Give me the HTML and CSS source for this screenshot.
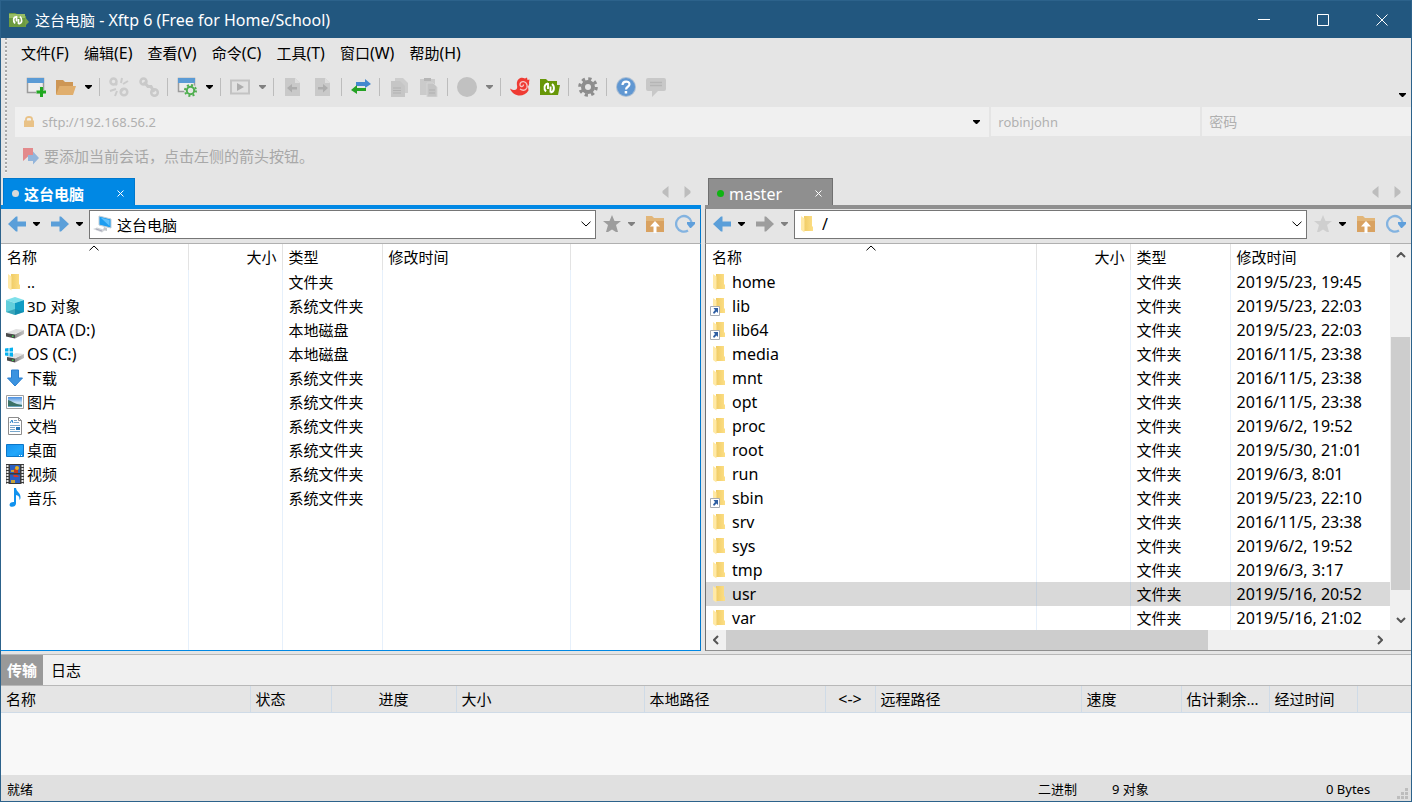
FILE: index.html
```
<!DOCTYPE html>
<html lang="zh-CN">
<head>
<meta charset="utf-8">
<title>这台电脑 - Xftp 6</title>
<link rel="stylesheet" href="styles.css">
</head>
<body>
<svg class="sprite" aria-hidden="true">
  <defs>
    <linearGradient id="gold" x1="0" x2="1"><stop offset="0" stop-color="#f0cc66"/><stop offset="1" stop-color="#fddf86"/></linearGradient>
    <linearGradient id="drive" x1="0" x2="1"><stop offset="0" stop-color="#8c8c8c"/><stop offset="1" stop-color="#c4c4c4"/></linearGradient>
    <linearGradient id="screen" x1="0" y1="0" x2="1" y2="1"><stop offset="0" stop-color="#1793f0"/><stop offset=".6" stop-color="#22a7fb"/><stop offset="1" stop-color="#1292ea"/></linearGradient>
    <linearGradient id="sky" x1="0" y1="0" x2="0" y2="1"><stop offset="0" stop-color="#4a8fe0"/><stop offset=".6" stop-color="#cfe6f5"/><stop offset="1" stop-color="#5b9bb8"/></linearGradient>
  </defs>
  <symbol id="i-folder" viewBox="0 0 20 20"><path d="M6 2h8v10l1 1v4H6z" fill="url(#gold)"/><path d="M3 2l3.500 2.500v14L3 16z" fill="#ffe9a6"/></symbol>
  <symbol id="i-link" viewBox="0 0 20 20"><path d="M6 2h8v10l1 1v4H6z" fill="url(#gold)"/><path d="M3 2l3.500 2.500v14L3 16z" fill="#ffe9a6"/><path d="M.5 10.500h9v9h-9z" fill="#fff" stroke="#a7acb3"/><path d="M3.500 12H8v5l-1.500-1.500L4 18l-1-1.500 2-2.500z" fill="#2f5fa3"/></symbol>
  <symbol id="i-cube" viewBox="0 0 20 20"><path d="M1 4l9-3 9 3-9 3z" fill="#7fe0ea"/><path d="M1 4l9 3v12l-9-3z" fill="#62cfdc"/><path d="M19 4l-9 3v12l9-3z" fill="#109cc4"/><path d="M1 16l9-3 9 3-9 3z" fill="#17839f" opacity=".55"/></symbol>
  <symbol id="i-disk" viewBox="0 0 20 20"><path d="M1 13l10-4 8 1-9 4z" fill="#e0e0e0"/><path d="M1 13l9 1.500v4l-9-2z" fill="#4a4a4a"/><path d="M10 14.500l9-4.500v4l-9 4.500z" fill="url(#drive)"/><path d="M7 15.500h1.500V17H7z" fill="#3fd04c"/></symbol>
  <symbol id="i-osdisk" viewBox="0 0 20 20"><path d="M1 13l10-4 8 1-9 4z" fill="#e0e0e0"/><path d="M2 13l8 1.500v4l-8-2z" fill="#4a4a4a"/><path d="M10 14.500l9-4.500v4l-9 4.500z" fill="url(#drive)"/><path d="M7 15.500h1.500V17H7z" fill="#3fd04c"/><path d="M0 4.500l3.500-.500v3.500H0zM4.500 3.900L8 3.400v4.100H4.500zM0 8.500h3.500V12L0 11.500zM4.500 8.500H8v4.200l-3.500-.500z" fill="#06b0ee"/></symbol>
  <symbol id="i-down" viewBox="0 0 20 20"><path d="M6.500 2h7v8h4L10 18 2.500 10h4z" fill="#3b93e0" stroke="#2a7fd0"/></symbol>
  <symbol id="i-pic" viewBox="0 0 20 20"><path d="M1.500 3.500h17v13h-17z" fill="#fff" stroke="#a0a0a0"/><path d="M3 5h14v10H3z" fill="url(#sky)"/><path d="M3 8c4 1 6 4 14 5v1H3z" fill="#3c7267"/></symbol>
  <symbol id="i-doc" viewBox="0 0 20 20"><path d="M3.500 1.500h10l3 3v14h-13z" fill="#fff" stroke="#8c8c8c"/><path d="M13.500 1.500v3h3" fill="none" stroke="#8c8c8c"/><path d="M5 7l2-3 1 3" fill="none" stroke="#1f7fc9"/><path d="M9 4.500h3M9 6.500h5M5 9.500h10M5 11.500h5M5 13.500h5M5 15.500h10" stroke="#77a7cc"/><path d="M11 11h4v3h-4z" fill="#2474b5"/></symbol>
  <symbol id="i-desktop" viewBox="0 0 20 20"><path d="M1.500 4.500h17v12h-17z" fill="url(#screen)" stroke="#0b76c8"/><path d="M14 15.500h1M16 15.500h1" stroke="#fff"/></symbol>
  <symbol id="i-video" viewBox="0 0 20 20"><path d="M1 0h18v20H1z" fill="#3a3a3a"/><path d="M5 1h10v8H5zM5 10.500h10V19H5z" fill="#2c5fc0"/><path d="M2.500 1v19M17.500 1v19" stroke="#e8e8e8" stroke-width="2" stroke-dasharray="2 1"/><path d="M9 5h4v4H9z" fill="#c33a1d"/><circle cx="12" cy="4" r="2" fill="#e8b121"/><path d="M8 11h4l2 2H9z" fill="#d9392a"/><path d="M6 6h3v2H6zM6 16h4v3H6z" fill="#c9a33a"/></symbol>
  <symbol id="i-music" viewBox="0 0 20 20"><path d="M9 0h2c.300 4 5 4.500 4.500 10-.200 1-.500 1.500-1 2 .200-4-1.500-4.500-3.500-5v8.500C11 18 8 19.500 5.500 18.500 3.500 17 5 13.500 9 14z" fill="#1192ee"/></symbol>
  <symbol id="i-pc" viewBox="0 0 20 20"><path d="M6 2l12 3v9L6 11z" fill="#1d9df0" stroke="#c3ced6"/><path d="M7.500 3.500l9 2.500v6z" fill="#5ec0fb"/><path d="M11 13l3 1v3l-4-1z" fill="#c2c7cb"/><path d="M0 15l4-1.500 8 2.500-3 2.500z" fill="#d0d4d8"/><path d="M3 15l6 2" stroke="#aab"/></symbol>
  <symbol id="i-left" viewBox="0 0 20 20"><path d="M1 10l8-7.500h1.500V7.500H19v5h-8.500v5H9z" fill="currentColor"/></symbol>
  <symbol id="i-right" viewBox="0 0 20 20"><path d="M19 10l-8-7.500H9.500V7.500H1v5h8.500v5H11z" fill="currentColor"/></symbol>
  <symbol id="i-star" viewBox="0 0 20 20"><path d="M10 1l2.500 6H19l-5 4 2 7H14l-4-2.500L6 18H4l2-7-5-4h6.500z" fill="currentColor"/></symbol>
  <symbol id="i-up" viewBox="0 0 20 20"><path d="M1 2h6l2 2h10v14H1z" fill="#e2b679"/><path d="M1 7h18v11H1z" fill="#d9a261"/><path d="M10 7l5 5.500h-3.500V19h-3v-6.500H5z" fill="#fff"/></symbol>
  <symbol id="i-refresh" viewBox="0 0 20 20"><path d="M16.500 8a7.800 7.800 0 1 0-3.500 8.500" fill="none" stroke="#83b3e0" stroke-width="2.300"/><path d="M12 8h8v2l-4 4h-1l-3-4z" fill="#5f9fdb"/></symbol>
  <symbol id="i-new" viewBox="0 0 20 20"><path d="M1.500 1.500h16v14h-16z" fill="#eee" stroke="#9b9b9b" stroke-width="1.500"/><path d="M1 1h17v5H1z" fill="#5b9bd5"/><path d="M13 9h4v4h3.500v3H17v4h-3v-4h-4v-3h4z" fill="#e5e5e5"/><path d="M14 10h3v3.500h3.500v3H17V20h-3v-3.500h-3.500v-3H14z" fill="#21a821"/></symbol>
  <symbol id="i-open" viewBox="0 0 20 20"><path d="M0 3h7l2 2h8v12H0z" fill="#cd9655"/><path d="M3.500 9H20l-3 9H0z" fill="#e0ae6d"/></symbol>
  <symbol id="i-unlink" viewBox="0 0 20 20"><g fill="none" stroke="#cbcbcb" stroke-width="2.500"><circle cx="4.500" cy="4.500" r="3"/><circle cx="15" cy="15" r="3.300"/><path d="M12 12l2 2M8 8L6 6"/></g><path d="M12 6l1-5M14 7l5-3M7 12l-6 2M8 14l-2 5" stroke="#cbcbcb" stroke-width="2"/></symbol>
  <symbol id="i-chain" viewBox="0 0 20 20"><g fill="none" stroke="#c9c9c9" stroke-width="2.500"><circle cx="4.500" cy="4.500" r="3"/><circle cx="15.500" cy="15.500" r="3.300"/><path d="M5 5l4 4.500h3L15 15" stroke-width="3"/></g></symbol>
  <symbol id="i-props" viewBox="0 0 20 20"><path d="M1.500 1.500h16v13h-16z" fill="#eee" stroke="#9b9b9b" stroke-width="1.500"/><path d="M1 1h17v5H1z" fill="#5b9bd5"/><circle cx="13.500" cy="13.500" r="6.500" fill="#e5e5e5"/><circle cx="13.500" cy="13.500" r="3.700" fill="none" stroke="#4eae4e" stroke-width="2"/><circle cx="13.500" cy="13.500" r="5.500" fill="none" stroke="#4eae4e" stroke-width="2" stroke-dasharray="2 2.320"/></symbol>
  <symbol id="i-run" viewBox="0 0 20 20"><path d="M1 3.500h18v13H1z" fill="#e2e2e2" stroke="#c3c3c3" stroke-width="2"/><path d="M7 6l7 4-7 4z" fill="#adadad"/></symbol>
  <symbol id="i-docl" viewBox="0 0 20 20"><path d="M2 1h10l5 5v13H2z" fill="#c9c9c9"/><path d="M12 1v5h5z" fill="#dedede"/><path d="M4 11l5-4v3h5v2.500H9v3z" fill="#adadad"/></symbol>
  <symbol id="i-docr" viewBox="0 0 20 20"><path d="M2 1h10l5 5v13H2z" fill="#c9c9c9"/><path d="M12 1v5h5z" fill="#dedede"/><path d="M15 11l-5-4v3H5v2.500h5v3z" fill="#adadad"/></symbol>
  <symbol id="i-sync" viewBox="0 0 20 20"><path d="M5 5h9V2l6 5-6 4V9H5z" fill="#4488cf"/><path d="M15 11H6V8l-6 5 6 4v-3h9z" fill="#25a225"/></symbol>
  <symbol id="i-copy" viewBox="0 0 20 20"><path d="M6 1h8l5 5v10H6z" fill="#cdcdcd"/><path d="M2 4h9l5 5v11H2z" fill="#c6c6c6"/><path d="M4 11h8M4 13.500h8M4 16h8" stroke="#b2b2b2"/></symbol>
  <symbol id="i-paste" viewBox="0 0 20 20"><path d="M1 2h15v16H1z" fill="#cbcbcb"/><path d="M5 1h7v3H5z" fill="#b6b6b6"/><path d="M8 6h6l4 4v10H8z" fill="#c4c4c4" stroke="#d5d5d5"/><path d="M10 13h6M10 16h6" stroke="#b0b0b0"/></symbol>
  <symbol id="i-disc" viewBox="0 0 20 20"><circle cx="10" cy="10" r="10" fill="#c1c1c1"/></symbol>
  <symbol id="i-xshell" viewBox="0 0 20 20"><path d="M0 11.500c5 3 8 1.500 7-3C6 3 10-1 15 1.500l2-1L17.500 3l2-.500-.500 3c.500 1.500-.200 3-1 4l.500 4C14 21 3 20 0 11.500z" fill="#ef3b33"/><path d="M10 12c4 3 8 0 7-4s-6-4.500-7-1c-.500 3 3.500 3.500 3.500.500" fill="none" stroke="#f7c6c3" stroke-width="1.300"/></symbol>
  <symbol id="i-xftp" viewBox="0 0 20 20"><path d="M0 2h6l2 2h9v4h3l-2 10H0z" fill="#679708"/><path d="M8 6.500C4 7 3.500 12 6 14.500M8 6v6M10.500 15.500c4-.500 4.500-6 1.500-8.500M10.500 15.500V9.500" fill="none" stroke="#fff" stroke-width="1.900"/></symbol>
  <symbol id="i-app" viewBox="0 0 20 20"><path d="M0 3h6l2 1h8v2h1v11H0z" fill="#6c9b3f"/><path d="M0 4h16v4H0z" fill="#97bd65"/><path d="M7.500 6.500C4 7 4 11 6 13.500M7.500 6v5.500M9.500 14c4-.500 4-5 1.500-7.500M9.500 14V9" fill="none" stroke="#fff" stroke-width="1.700"/><path d="M16 7l4 5-4 4z" fill="#78a34a"/></symbol>
  <symbol id="i-gear" viewBox="0 0 20 20"><circle cx="10" cy="10" r="5" fill="none" stroke="#8d8d8d" stroke-width="4"/><circle cx="10" cy="10" r="8.200" fill="none" stroke="#8d8d8d" stroke-width="3.200" stroke-dasharray="3.200 3.240"/></symbol>
  <symbol id="i-help" viewBox="0 0 20 20"><circle cx="10" cy="10" r="10" fill="#a9bdd3"/><circle cx="10" cy="10" r="9" fill="#6097d2"/><path d="M6.500 8c0-4.500 7-4.500 7-.700 0 2.700-3.500 2.200-3.500 5.200" fill="none" stroke="#fff" stroke-width="2.200"/><path d="M8.700 14h2.500v2.500H8.700z" fill="#fff"/></symbol>
  <symbol id="i-chat" viewBox="0 0 20 20"><path d="M2 1h16q2 0 2 2v9q0 2-2 2h-6l-6 6v-6H2q-2 0-2-2V3q0-2 2-2z" fill="#c8c8c8"/><path d="M4 5.500h12M4 8.500h12" stroke="#b5b5b5" stroke-width="1.300"/></symbol>
  <symbol id="i-lock" viewBox="0 0 12 12"><path d="M3 5V3q0-2 3-2t3 2v2" fill="none" stroke="#e9c287" stroke-width="1.800"/><path d="M1 4.500h10v6.500H1z" fill="#e9c287"/></symbol>
  <symbol id="i-flag" viewBox="0 0 16 18"><path d="M0 1h10v12l-5-3.500L0 14z" fill="#e38a8c"/><path d="M5 8h5V4.500l6 6.500-6 6.500V14H5z" fill="#93b5db"/></symbol>
  <symbol id="i-caret" viewBox="0 0 7 4"><path d="M0 0h7v1L4 4H3L0 1z" fill="currentColor"/></symbol>
  <symbol id="i-chev" viewBox="0 0 10 6"><path d="M.5.700L5 5 9.500.700" fill="none" stroke="currentColor"/></symbol>
  <symbol id="i-chevb" viewBox="0 0 10 6"><path d="M1 1l4 4 4-4" fill="none" stroke="#555" stroke-width="2"/></symbol>
  <symbol id="i-tri" viewBox="0 0 6 12"><path d="M6 0v12L0 7V5z" fill="#bdbdbd"/></symbol>
  <symbol id="i-x" viewBox="0 0 7 7"><path d="M.5.500l6 6M6.500.500l-6 6" stroke="currentColor"/></symbol>
</svg>

<div class="window">
  <header class="titlebar">
    <svg class="app-icon"><use href="#i-app"/></svg>
    <h1>这台电脑<span class="latin"> - Xftp 6 (Free for Home/School)</span></h1>
    <button aria-label="最小化"><svg viewBox="0 0 12 12"><path d="M0 5.500h12" stroke="#fff"/></svg></button>
    <button aria-label="最大化"><svg viewBox="0 0 12 12"><path d="M.5.500h11v11H.5z" fill="none" stroke="#fff"/></svg></button>
    <button aria-label="关闭"><svg viewBox="0 0 12 12"><path d="M.5.500l11 11M11.500.500l-11 11" stroke="#fff"/></svg></button>
  </header>

  <div class="dock">
    <div class="grip"></div>
    <div class="bars">
      <nav class="menu">
        <button>文件<span class="latin">(F)</span></button><button>编辑<span class="latin">(E)</span></button><button>查看<span class="latin">(V)</span></button><button>命令<span class="latin">(C)</span></button><button>工具<span class="latin">(T)</span></button><button>窗口<span class="latin">(W)</span></button><button>帮助<span class="latin">(H)</span></button>
      </nav>
      <div class="toolbar">
        <button class="tool" aria-label="新建"><svg><use href="#i-new"/></svg></button>
        <button class="tool" aria-label="打开"><svg><use href="#i-open"/></svg></button>
        <button class="drop" aria-label="打开列表"><svg><use href="#i-caret"/></svg></button>
        <span class="sep"></span>
        <button class="tool" aria-label="断开"><svg><use href="#i-unlink"/></svg></button>
        <button class="tool" aria-label="重新连接"><svg><use href="#i-chain"/></svg></button>
        <span class="sep"></span>
        <button class="tool" aria-label="属性"><svg><use href="#i-props"/></svg></button>
        <button class="drop" aria-label="属性列表"><svg><use href="#i-caret"/></svg></button>
        <span class="sep"></span>
        <button class="tool" aria-label="执行"><svg><use href="#i-run"/></svg></button>
        <button class="drop dim" aria-label="执行列表"><svg><use href="#i-caret"/></svg></button>
        <span class="sep"></span>
        <button class="tool" aria-label="下载"><svg><use href="#i-docl"/></svg></button>
        <button class="tool" aria-label="上传"><svg><use href="#i-docr"/></svg></button>
        <span class="sep"></span>
        <button class="tool" aria-label="同步"><svg><use href="#i-sync"/></svg></button>
        <span class="sep"></span>
        <button class="tool" aria-label="复制"><svg><use href="#i-copy"/></svg></button>
        <button class="tool" aria-label="粘贴"><svg><use href="#i-paste"/></svg></button>
        <span class="sep"></span>
        <button class="tool" aria-label="浏览"><svg><use href="#i-disc"/></svg></button>
        <button class="drop dim" aria-label="浏览列表"><svg><use href="#i-caret"/></svg></button>
        <span class="sep"></span>
        <button class="tool" aria-label="Xshell"><svg><use href="#i-xshell"/></svg></button>
        <button class="tool" aria-label="Xftp"><svg><use href="#i-xftp"/></svg></button>
        <span class="sep"></span>
        <button class="tool" aria-label="选项"><svg><use href="#i-gear"/></svg></button>
        <span class="sep"></span>
        <button class="tool" aria-label="帮助"><svg><use href="#i-help"/></svg></button>
        <button class="tool" aria-label="反馈"><svg><use href="#i-chat"/></svg></button>
        <button class="drop overflow" aria-label="更多"><svg><use href="#i-caret"/></svg></button>
      </div>
      <form class="address">
        <div class="host"><svg class="lock"><use href="#i-lock"/></svg><input aria-label="主机" placeholder="sftp://192.168.56.2"><button type="button" class="drop" aria-label="历史"><svg><use href="#i-caret"/></svg></button></div>
        <input class="user" aria-label="用户名" placeholder="robinjohn">
        <input class="pass" type="password" aria-label="密码" placeholder="密码">
      </form>
    </div>
    <div class="grip"></div>
    <div class="session"><svg><use href="#i-flag"/></svg><span>要添加当前会话，点击左侧的箭头按钮。</span></div>
  </div>

  <main class="panes">
    <section class="pane local">
      <div class="tabs">
        <div class="tab"><i class="dot"></i><span>这台电脑</span><button aria-label="关闭标签"><svg><use href="#i-x"/></svg></button></div>
        <button class="scroll" aria-label="向左"><svg><use href="#i-tri"/></svg></button>
        <button class="scroll next" aria-label="向右"><svg><use href="#i-tri"/></svg></button>
      </div>
      <div class="pathbar">
        <button class="nav blue" aria-label="后退"><svg><use href="#i-left"/></svg></button>
        <button class="drop" aria-label="后退列表"><svg><use href="#i-caret"/></svg></button>
        <button class="nav blue" aria-label="前进"><svg><use href="#i-right"/></svg></button>
        <button class="drop" aria-label="前进列表"><svg><use href="#i-caret"/></svg></button>
        <div class="path"><svg class="ico"><use href="#i-pc"/></svg><input aria-label="本地路径" value="这台电脑"><button aria-label="展开"><svg><use href="#i-chev"/></svg></button></div>
        <button class="nav grey" aria-label="书签"><svg><use href="#i-star"/></svg></button>
        <button class="drop dim" aria-label="书签列表"><svg><use href="#i-caret"/></svg></button>
        <button class="nav" aria-label="上一级"><svg><use href="#i-up"/></svg></button>
        <button class="nav tail" aria-label="刷新"><svg><use href="#i-refresh"/></svg></button>
      </div>
      <div class="list">
        <table class="files">
          <colgroup><col class="w187"><col class="w94"><col class="w100"><col class="w188"><col></colgroup>
          <thead><tr><th>名称<svg class="sort"><use href="#i-chev"/></svg></th><th class="num">大小</th><th>类型</th><th>修改时间</th><th></th></tr></thead>
          <tbody>
            <tr><td><span class="name"><svg><use href="#i-folder"/></svg>..</span></td><td></td><td>文件夹</td><td></td><td></td></tr>
            <tr><td><span class="name"><svg><use href="#i-cube"/></svg>3D 对象</span></td><td></td><td>系统文件夹</td><td></td><td></td></tr>
            <tr><td><span class="name latin"><svg><use href="#i-disk"/></svg>DATA (D:)</span></td><td></td><td>本地磁盘</td><td></td><td></td></tr>
            <tr><td><span class="name latin"><svg><use href="#i-osdisk"/></svg>OS (C:)</span></td><td></td><td>本地磁盘</td><td></td><td></td></tr>
            <tr><td><span class="name"><svg><use href="#i-down"/></svg>下载</span></td><td></td><td>系统文件夹</td><td></td><td></td></tr>
            <tr><td><span class="name"><svg><use href="#i-pic"/></svg>图片</span></td><td></td><td>系统文件夹</td><td></td><td></td></tr>
            <tr><td><span class="name"><svg><use href="#i-doc"/></svg>文档</span></td><td></td><td>系统文件夹</td><td></td><td></td></tr>
            <tr><td><span class="name"><svg><use href="#i-desktop"/></svg>桌面</span></td><td></td><td>系统文件夹</td><td></td><td></td></tr>
            <tr><td><span class="name"><svg><use href="#i-video"/></svg>视频</span></td><td></td><td>系统文件夹</td><td></td><td></td></tr>
            <tr><td><span class="name"><svg><use href="#i-music"/></svg>音乐</span></td><td></td><td>系统文件夹</td><td></td><td></td></tr>
            <tr class="fill"><td></td><td></td><td></td><td></td><td></td></tr>
          </tbody>
        </table>
      </div>
    </section>

    <section class="pane remote">
      <div class="tabs">
        <div class="tab"><i class="dot"></i><span>master</span><button aria-label="关闭标签"><svg><use href="#i-x"/></svg></button></div>
        <button class="scroll" aria-label="向左"><svg><use href="#i-tri"/></svg></button>
        <button class="scroll next" aria-label="向右"><svg><use href="#i-tri"/></svg></button>
      </div>
      <div class="pathbar">
        <button class="nav blue" aria-label="后退"><svg><use href="#i-left"/></svg></button>
        <button class="drop" aria-label="后退列表"><svg><use href="#i-caret"/></svg></button>
        <button class="nav grey" aria-label="前进"><svg><use href="#i-right"/></svg></button>
        <button class="drop dim" aria-label="前进列表"><svg><use href="#i-caret"/></svg></button>
        <div class="path"><svg class="ico"><use href="#i-folder"/></svg><input class="latin" aria-label="远程路径" value="/"><button aria-label="展开"><svg><use href="#i-chev"/></svg></button></div>
        <button class="nav pale" aria-label="书签"><svg><use href="#i-star"/></svg></button>
        <button class="drop" aria-label="书签列表"><svg><use href="#i-caret"/></svg></button>
        <button class="nav" aria-label="上一级"><svg><use href="#i-up"/></svg></button>
        <button class="nav tail" aria-label="刷新"><svg><use href="#i-refresh"/></svg></button>
      </div>
      <div class="list scrolled">
        <table class="files">
          <colgroup><col><col class="w94"><col class="w100"><col class="w160"></colgroup>
          <thead><tr><th>名称<svg class="sort"><use href="#i-chev"/></svg></th><th class="num">大小</th><th>类型</th><th>修改时间</th></tr></thead>
          <tbody>
            <tr><td><span class="name latin"><svg><use href="#i-folder"/></svg>home</span></td><td></td><td>文件夹</td><td class="latin">2019/5/23, 19:45</td></tr>
            <tr><td><span class="name latin"><svg><use href="#i-link"/></svg>lib</span></td><td></td><td>文件夹</td><td class="latin">2019/5/23, 22:03</td></tr>
            <tr><td><span class="name latin"><svg><use href="#i-link"/></svg>lib64</span></td><td></td><td>文件夹</td><td class="latin">2019/5/23, 22:03</td></tr>
            <tr><td><span class="name latin"><svg><use href="#i-folder"/></svg>media</span></td><td></td><td>文件夹</td><td class="latin">2016/11/5, 23:38</td></tr>
            <tr><td><span class="name latin"><svg><use href="#i-folder"/></svg>mnt</span></td><td></td><td>文件夹</td><td class="latin">2016/11/5, 23:38</td></tr>
            <tr><td><span class="name latin"><svg><use href="#i-folder"/></svg>opt</span></td><td></td><td>文件夹</td><td class="latin">2016/11/5, 23:38</td></tr>
            <tr><td><span class="name latin"><svg><use href="#i-folder"/></svg>proc</span></td><td></td><td>文件夹</td><td class="latin">2019/6/2, 19:52</td></tr>
            <tr><td><span class="name latin"><svg><use href="#i-folder"/></svg>root</span></td><td></td><td>文件夹</td><td class="latin">2019/5/30, 21:01</td></tr>
            <tr><td><span class="name latin"><svg><use href="#i-folder"/></svg>run</span></td><td></td><td>文件夹</td><td class="latin">2019/6/3, 8:01</td></tr>
            <tr><td><span class="name latin"><svg><use href="#i-link"/></svg>sbin</span></td><td></td><td>文件夹</td><td class="latin">2019/5/23, 22:10</td></tr>
            <tr><td><span class="name latin"><svg><use href="#i-folder"/></svg>srv</span></td><td></td><td>文件夹</td><td class="latin">2016/11/5, 23:38</td></tr>
            <tr><td><span class="name latin"><svg><use href="#i-folder"/></svg>sys</span></td><td></td><td>文件夹</td><td class="latin">2019/6/2, 19:52</td></tr>
            <tr><td><span class="name latin"><svg><use href="#i-folder"/></svg>tmp</span></td><td></td><td>文件夹</td><td class="latin">2019/6/3, 3:17</td></tr>
            <tr class="selected"><td><span class="name latin"><svg><use href="#i-folder"/></svg>usr</span></td><td></td><td>文件夹</td><td class="latin">2019/5/16, 20:52</td></tr>
            <tr><td><span class="name latin"><svg><use href="#i-folder"/></svg>var</span></td><td></td><td>文件夹</td><td class="latin">2019/5/16, 21:02</td></tr>
          </tbody>
        </table>
        <div class="vbar"><button class="to-up" aria-label="向上滚动"><svg><use href="#i-chevb"/></svg></button><div class="track"><div class="thumb"></div></div><button aria-label="向下滚动"><svg><use href="#i-chevb"/></svg></button></div>
        <div class="hbar"><button class="to-left" aria-label="向左滚动"><svg><use href="#i-chevb"/></svg></button><div class="track"><div class="thumb"></div></div><button class="to-right" aria-label="向右滚动"><svg><use href="#i-chevb"/></svg></button></div>
      </div>
    </section>
  </main>

  <section class="log">
    <div class="log-tabs"><button class="on">传输</button><button>日志</button></div>
    <table class="transfers">
      <colgroup><col class="w249"><col class="w81"><col class="w125"><col class="w188"><col class="w181"><col class="w50"><col class="w206"><col class="w100"><col class="w88"><col class="w88"><col></colgroup>
      <thead><tr><th>名称</th><th>状态</th><th class="mid">进度</th><th>大小</th><th>本地路径</th><th class="mid latin">&lt;-&gt;</th><th>远程路径</th><th>速度</th><th>估计剩余...</th><th>经过时间</th><th></th></tr></thead>
    </table>
  </section>

  <footer class="status">
    <span class="state">就绪</span><span class="mode">二进制</span><span class="count">9 对象</span><span class="bytes">0 Bytes</span>
    <svg class="resize" viewBox="0 0 11 11"><path d="M8 0h3v3H8zM4 4h3v3H4zM8 4h3v3H8zM0 8h3v3H0zM4 8h3v3H4zM8 8h3v3H8z" fill="#bdbdbd"/></svg>
  </footer>
</div>
</body>
</html>
```

FILE: styles.css
```
* { box-sizing: border-box; }

html, body { height: 100%; }

body {
  margin: 0;
  font: 15px/20px "Noto Sans", "Noto Sans CJK SC", sans-serif;
  color: #000;
}

button, input {
  font: inherit;
  color: inherit;
  border: 0;
  padding: 0;
  margin: 0;
  background: none;
}

svg { display: block; flex: none; }
.sprite { position: absolute; width: 0; height: 0; }
.latin { font-size: 16px; }

.window {
  display: flex;
  flex-direction: column;
  min-height: 100%;
  border: 1px solid #2c628b;
  background: #e5e5e5;
}

/* title bar */
.titlebar {
  display: flex;
  align-items: center;
  height: 37px;
  padding-left: 8px;
  background: #22577f;
  color: #fff;
}
.titlebar h1 { flex: 1; margin: 0; font-size: 15px; font-weight: 400; }
.app-icon { width: 20px; height: 20px; margin-right: 6px; }
.titlebar button { display: grid; place-items: center; width: 59px; height: 37px; }
.titlebar button svg { width: 12px; height: 12px; }

/* menu, toolbar and address */
.dock {
  display: grid;
  grid-template-columns: 3px 1fr;
  column-gap: 7px;
  row-gap: 2px;
  padding-left: 4px;
}
.grip {
  background: repeating-linear-gradient(#a8a8a8 0 2px, #f5f5f5 2px 3px, #e5e5e5 3px 4px);
  width: 2px;
}
.menu { display: flex; gap: 15px; height: 32px; padding: 0 0 2px 6px; align-items: center; }
.toolbar { display: flex; align-items: center; height: 34px; padding: 0 0 0 6px; }
.tool, .drop { display: grid; place-items: center; height: 30px; }
.tool { width: 30px; }
.tool svg { width: 20px; height: 20px; }
.drop { width: 15px; flex: none; }
.drop svg { width: 7px; height: 4px; }
.dim { color: #808080; }
.sep { width: 1px; height: 18px; margin: 0 4px 0 3px; background: #bcbcbc; }
.overflow { margin-left: auto; margin-right: 1px; align-self: end; height: 18px; }
.address {
  display: grid;
  grid-template-columns: 975fr 209fr 209fr;
  gap: 2px;
  height: 29px;
  margin-top: 3px;
  font-size: 13px;
}
.address input { width: 100%; min-width: 0; height: 29px; }
.address input::placeholder { color: #b0b0b0; opacity: 1; }
.host { display: flex; align-items: center; padding: 0 5px 0 8px; background: #f0f0f0; }
.lock { width: 12px; height: 12px; margin-right: 7px; }
.address .user, .address .pass { padding-left: 7px; background: #f0f0f0; }
.address .pass { font-size: 14px; }
.session {
  display: flex;
  align-items: center;
  gap: 5px;
  height: 36px;
  padding-left: 8px;
  color: #a8a8a8;
}
.session svg { width: 16px; height: 18px; }

/* panes */
.panes { display: flex; flex: 1; gap: 4px; padding-top: 4px; }
.pane { display: flex; flex-direction: column; min-width: 0; }
.local { flex: 700 1 0; --accent: #0088e4; --edge: #0078cc; }
.remote { flex: 706 1 0; --accent: #8f8f8f; --edge: #707070; }
.tabs {
  display: flex;
  align-items: center;
  height: 31px;
  padding: 0 10px 0 2px;
  border-bottom: 4px solid var(--accent);
}
.remote .tabs { padding-left: 3px; }
.tab {
  display: flex;
  align-items: center;
  height: 27px;
  padding: 3px 8px 0 8px;
  margin-right: auto;
  border: 1px solid var(--edge);
  border-bottom: 0;
  background: var(--accent);
  color: #fff;
}
.tab span { margin: 0 31px 0 5px; }
.local .tab { font-weight: 700; }
.remote .tab span { font-size: 16px; }
.dot { width: 7px; height: 7px; border-radius: 50%; background: #d9d9d9; }
.remote .dot { background: #0fb412; }
.tab button { padding: 2px; }
.tab button svg { width: 7px; height: 7px; }
.scroll { margin-right: 15px; }
.scroll svg { width: 7px; height: 12px; }
.next { margin-right: 0; transform: scaleX(-1); }

.pathbar {
  display: flex;
  align-items: center;
  height: 35px;
  padding: 0 5px 5px 6px;
  border-bottom: 1px solid #b0b0b0;
}
.local .pathbar, .local .list { border-right: 1px solid #0078cc; }
.remote .pathbar, .remote .list { border-left: 1px solid var(--edge); }
.nav { width: 20px; height: 28px; display: grid; place-items: center; }
.nav svg { width: 20px; height: 20px; }
.pathbar .drop { width: 14px; margin: 0 3px 0 2px; }
.drop + .nav { margin-left: 4px; }
.blue { color: #5b9fd9; }
.grey { color: #9d9d9d; }
.pale { color: #cfcfcf; }
.path {
  display: flex;
  align-items: center;
  flex: 1;
  min-width: 0;
  height: 29px;
  margin-top: 1px;
  margin-right: 6px;
  padding: 0 3px;
  border: 1px solid #767676;
  background: #fff;
}
.path .ico { width: 20px; height: 20px; margin-right: 4px; }
.path input { flex: 1; min-width: 0; height: 24px; }
.path button svg { width: 10px; height: 6px; margin: 0 1px; }
.tail { margin-left: 10px; }

/* file lists */
.list { flex: 1; background: #fff; border-bottom: 1px solid var(--accent); }
.local .list { display: grid; }
.files { width: 100%; border-collapse: collapse; table-layout: fixed; }
.files th, .files td {
  height: 24px;
  padding: 0 6px;
  font-weight: 400;
  text-align: left;
  white-space: nowrap;
}
.files th { position: relative; height: 26px; }
.files th + th { border-left: 1px solid #e3e3e3; }
.files td + td { border-left: 1px solid #e6f0fb; }
.files .num { text-align: right; padding-right: 5px; }
.files .fill td { height: auto; }
.files td:first-child { padding-left: 4px; }
.sort { position: absolute; top: 1px; left: 50%; width: 10px; height: 6px; transform: translateX(-50%) scaleY(-1); }
.name { display: flex; align-items: center; gap: 2px; height: 24px; }
.name svg { width: 20px; height: 20px; }
.selected { background: #d9d9d9; }
.files .selected td + td { border-left-color: #c5d0dc; }

.scrolled { display: grid; grid-template: 1fr 20px / 1fr 21px; background: #f0f0f0; }
.scrolled .files { grid-area: 1 / 1; align-self: start; background: #fff; }
.scrolled button { display: grid; place-items: center; width: 20px; height: 21px; }
.scrolled button svg { width: 10px; height: 6px; }
.to-up svg { transform: rotate(180deg); }
.to-left svg { transform: rotate(90deg); }
.to-right svg { transform: rotate(-90deg); }
.vbar { display: flex; flex-direction: column; grid-area: 1 / 2; padding-left: 1px; }
.hbar { display: flex; align-items: center; grid-area: 2 / 1; }
.track { flex: 1; display: grid; }
.vbar .track { grid-template-rows: 72fr 253fr 19fr; }
.vbar .thumb { grid-row: 2; margin-right: 1px; background: #cdcdcd; }
.hbar .track { height: 20px; grid-template-columns: 481fr 161fr; }
.hbar .thumb { background: #cdcdcd; }

/* transfer log */
.log { height: 121px; margin-top: 3px; border-top: 1px solid #b8b8b8; background: #f8f8f8; }
.log-tabs { display: flex; height: 31px; background: #f0f0f0; border-bottom: 1px solid #b8b8b8; }
.log-tabs button { padding: 0 8px; }
.log-tabs .on { padding: 0 6px; background: #999; color: #fff; font-weight: 700; }
.transfers { width: 100%; border-collapse: collapse; table-layout: fixed; background: #e5e5e5; }
.transfers th {
  height: 26px;
  padding: 0 5px;
  border-bottom: 1px solid #cfdbe7;
  font-weight: 400;
  text-align: left;
  white-space: nowrap;
}
.transfers th + th { border-left: 1px solid #cfdbe7; }
.transfers .mid { text-align: center; }

.status { display: flex; align-items: center; height: 26px; padding: 2px 6px 0; background: #e0e0e0; font-size: 13px; position: relative; }
.state { flex: 1; }
.mode { width: 74px; }
.count { width: 214px; }
.bytes { width: 79px; }
.resize { position: absolute; right: 3px; bottom: 2px; width: 11px; height: 11px; }

.w50 { width: 50px; }
.w81 { width: 81px; }
.w88 { width: 88px; }
.w94 { width: 94px; }
.w100 { width: 100px; }
.w125 { width: 125px; }
.w160 { width: 160px; }
.w181 { width: 181px; }
.w187 { width: 187px; }
.w188 { width: 188px; }
.w206 { width: 206px; }
.w249 { width: 249px; }
```
